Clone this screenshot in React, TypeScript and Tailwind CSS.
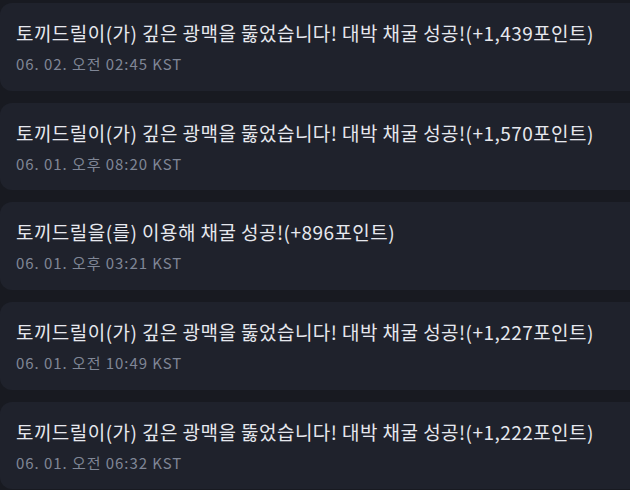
import React from "react";

const items = [
  { title: "토끼드릴이(가) 깊은 광맥을 뚫었습니다! 대박 채굴 성공!(+1,439포인트)", date: "06. 02. 오전 02:45 KST" },
  { title: "토끼드릴이(가) 깊은 광맥을 뚫었습니다! 대박 채굴 성공!(+1,570포인트)", date: "06. 01. 오후 08:20 KST" },
  { title: "토끼드릴을(를) 이용해 채굴 성공!(+896포인트)", date: "06. 01. 오후 03:21 KST" },
  { title: "토끼드릴이(가) 깊은 광맥을 뚫었습니다! 대박 채굴 성공!(+1,227포인트)", date: "06. 01. 오전 10:49 KST" },
  { title: "토끼드릴이(가) 깊은 광맥을 뚫었습니다! 대박 채굴 성공!(+1,222포인트)", date: "06. 01. 오전 06:32 KST" },
];

export default function App() {
  return (
    <div
      className="w-[630px] h-[490px] overflow-hidden bg-[#181a21] pt-[3px]"
      style={{ fontFamily: '"Noto Sans CJK KR", "Noto Sans", sans-serif' }}
    >
      <div className="w-[660px] flex flex-col gap-3">
        {items.map((it, i) => (
          <div key={i} className="bg-[#1f222c] rounded-xl pl-4 pt-4 pb-[15.7px]">
            <div className="text-[19px] leading-[28px] tracking-[0.45px] text-[#e6e8ee]">{it.title}</div>
            <div className="mt-[6px] text-[15px] leading-[22px] tracking-[0.95px] text-[#7f8696]">{it.date}</div>
          </div>
        ))}
      </div>
    </div>
  );
}
